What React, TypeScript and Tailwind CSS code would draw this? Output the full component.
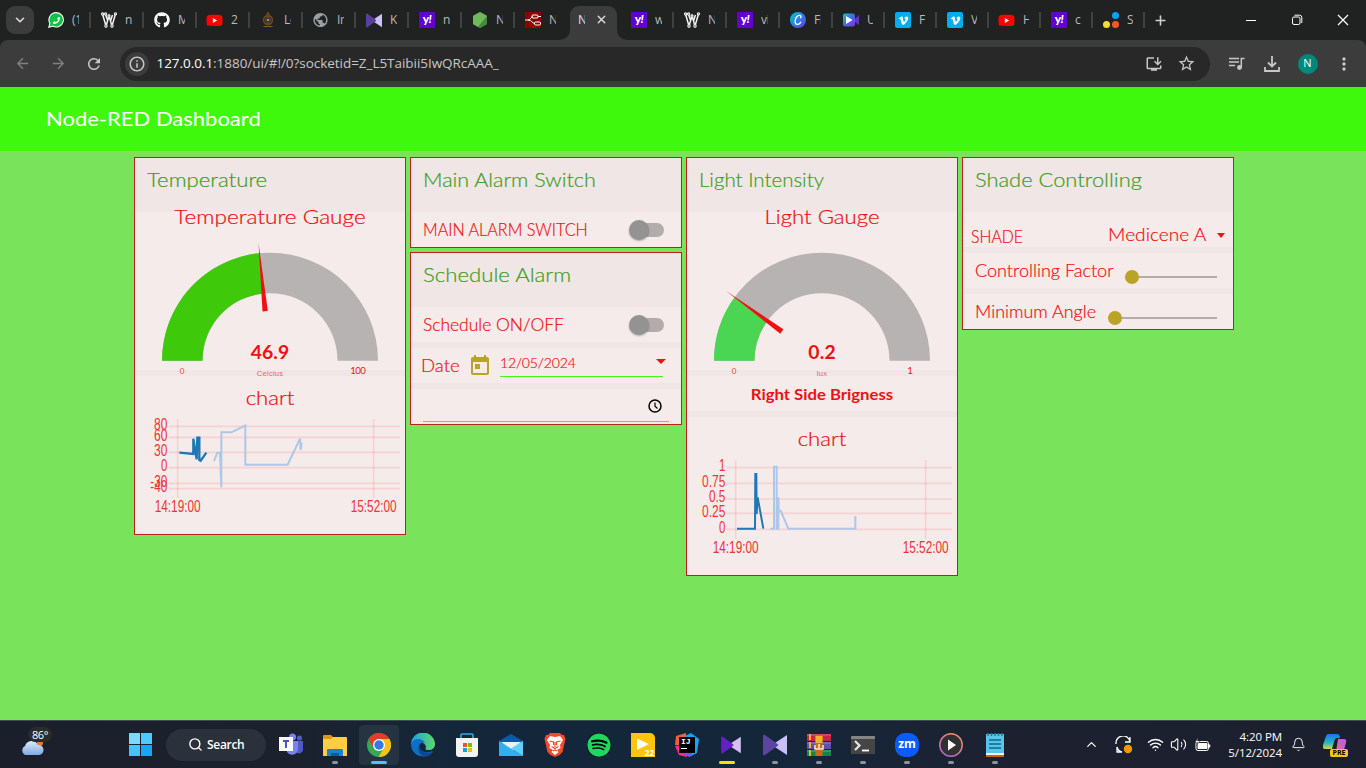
import React from "react";
import type { ReactNode } from "react";
import { FaGithub, FaYoutube, FaVimeoV, FaSpotify, FaPhoneAlt } from "react-icons/fa";
import {
  MdArrowBack, MdArrowForward, MdRefresh, MdStarBorder,
  MdMoreVert, MdOutlineInstallDesktop, MdToday, MdPublic, MdOutlineInfo,
} from "react-icons/md";
import { ChevronDown, ChevronUp, Plus, Search, X, Wifi, Volume2, Bell } from "lucide-react";

const WhatsappIcon = () => (
  <span className="relative flex h-4 w-4 items-center justify-center">
    <svg viewBox="0 0 16 16" className="absolute h-4 w-4"><path d="M8.200.6a7.200 7.200 0 1 1-3.500 13.500L.8 15.200l1.100-3.800A7.200 7.200 0 0 1 8.200.6z" fill="#0fc144" stroke="#f5fff5" strokeWidth="1.100" /></svg>
    <FaPhoneAlt size={7} className="relative -scale-x-100 text-white" />
  </span>
);

const CircuitW = () => (
  <svg viewBox="0 0 16 16" className="h-4 w-4" fill="none" stroke="#f4f4f4" strokeWidth="1.5">
    <path d="M1.5 2 5 14 8 4l3 10L14.5 2M4.5 2.5 6.5 8M9.5 9l2-6" />
    <g fill="#202221" strokeWidth="1.1"><circle cx="1.6" cy="2" r="1.1" /><circle cx="4.6" cy="2" r="1.1" /><circle cx="8" cy="4" r="1.1" /><circle cx="14.4" cy="1.8" r="1.1" /><circle cx="5" cy="14" r="1.2" /><circle cx="11" cy="14" r="1.2" /></g>
  </svg>
);

const Yahoo = () => (
  <span className="flex h-4 w-4 items-center justify-center bg-[#6001d2] pb-[2px] font-['Lato',sans-serif] text-[12px] font-black leading-none tracking-[-0.5px] text-white">y<i>!</i></span>
);

const Emblem = () => (
  <svg viewBox="0 0 16 16" className="h-4 w-4" fill="none">
    <path d="M6.500 3 8 .5 9.500 3v2h-3zM3.500 14.500h9M5 12h6" stroke="#8f5a1c" />
    <circle cx="8" cy="8" r="4.400" stroke="#704719" strokeWidth="1.600" />
    <circle cx="8" cy="8" r="2.500" stroke="#3d4858" strokeWidth="1.200" />
    <circle cx="8" cy="8" r="1.300" fill="#d08a25" />
  </svg>
);

const Globe = () => <MdPublic size={18} className="-ml-px text-[#9aa0a6]" />;

const Bowtie = ({ left, right, className }: { left: string; right: string; className: string }) => (
  <svg viewBox="0 0 24 22" className={className}>
    <path d="M24 1v20L10 11.8a1 1 0 0 1 0-1.6z" fill={right} />
    <path d="M0 2Q0 0 2 1l12.500 9a1.200 1.200 0 0 1 0 2L2 21Q0 22 0 20z" fill={left} />
  </svg>
);

const NodeHex = () => (
  <svg viewBox="0 0 16 16" className="h-4 w-4">
    <path d="M8 0l7 4v8l-7 4-7-4V4z" fill="#5fa04e" />
    <path d="M8 0l7 4-9 10.900L1 12V4z" fill="#6fb85e" />
    <path d="M15 4v8l-7 4-2-1.100z" fill="#458a3c" />
  </svg>
);

const NodeRedIcon = () => (
  <svg viewBox="0 0 16 16" className="h-4 w-4 bg-[#8f0000]" fill="none" stroke="#fff" strokeWidth="1">
    <path d="M0 8h3c3 0 3-3.500 5-3.500M3 8c4 0 4 3.500 7 3.500M13 4.500h3M15 11.500h1" />
    <rect x="7" y="3" width="6" height="3" rx="1" /><rect x="9.500" y="10" width="6" height="3" rx="1" />
  </svg>
);

const YouTube = () => <FaYoutube size={17} className="-ml-px text-[#fe0000] [background:radial-gradient(circle,white_25%,transparent_26%)]" />;

const Canva = () => (
  <svg viewBox="0 0 16 16" className="h-4 w-4">
    <defs><linearGradient id="cv" x1="0" y1="0" x2="1" y2="1"><stop offset="0" stopColor="#00c9cf" /><stop offset=".5" stopColor="#2c83e4" /><stop offset="1" stopColor="#7a2ae8" /></linearGradient></defs>
    <circle cx="8" cy="8" r="8" fill="url(#cv)" />
    <path d="M10.600 5.800c.800-1.200.2-2.600-1.400-2.400C6.800 3.700 5 7 5.100 9.700c.1 3.400 3.800 3.600 5.600.6" fill="none" stroke="#fff" strokeWidth="1.300" strokeLinecap="round" />
  </svg>
);

const Cam = () => (
  <svg viewBox="0 0 16 16" className="h-4 w-4">
    <defs><linearGradient id="cm" x1="0" y1="0" x2="1" y2="1"><stop offset="0" stopColor="#12c7c4" /><stop offset=".5" stopColor="#3f6ce2" /><stop offset="1" stopColor="#8a2be8" /></linearGradient></defs>
    <path d="M2 1.500h7.500a2.500 2.500 0 0 1 2.500 2.500v8a2.500 2.500 0 0 1-2.500 2.500H2a2 2 0 0 1-2-2v-9a2 2 0 0 1 2-2z" fill="url(#cm)" />
    <path d="m12 7 4-4v10l-4-3z" fill="#6234c8" />
    <path d="m3 4 6.500 4L3 12z" fill="#fff" />
  </svg>
);

const Vimeo = () => <span className="flex h-4 w-4 items-center justify-center rounded-[2px] bg-[#00adef] text-white"><FaVimeoV size={11} /></span>;

const Dots = () => (
  <svg viewBox="0 0 16 16" className="h-4 w-4">
    <circle cx="12.500" cy="3.500" r="3.500" fill="#03a3f8" /><circle cx="3.500" cy="12.500" r="3.500" fill="#fddb2b" /><circle cx="12.500" cy="12.500" r="3.500" fill="#fd5722" />
  </svg>
);

const TabBow = () => <Bowtie left="#5b3fa0" right="#ccc2fb" className="h-[15px] w-4" />;

interface TabData { icon: ReactNode; label: string; narrow?: boolean; last?: boolean }

const before: TabData[] = [
  { icon: <WhatsappIcon />, label: "(1" },
  { icon: <CircuitW />, label: "n" },
  { icon: <FaGithub size={16} className="text-white" />, label: "M" },
  { icon: <YouTube />, label: "2" },
  { icon: <Emblem />, label: "Lo" },
  { icon: <Globe />, label: "Ir" },
  { icon: <TabBow />, label: "K" },
  { icon: <Yahoo />, label: "n" },
  { icon: <NodeHex />, label: "N" },
  { icon: <NodeRedIcon />, label: "N", last: true },
];

const after: TabData[] = [
  { icon: <Yahoo />, label: "w" },
  { icon: <CircuitW />, label: "N" },
  { icon: <Yahoo />, label: "vi" },
  { icon: <Canva />, label: "Fi" },
  { icon: <Cam />, label: "U", narrow: true },
  { icon: <Vimeo />, label: "F", narrow: true },
  { icon: <Vimeo />, label: "V", narrow: true },
  { icon: <YouTube />, label: "H", narrow: true },
  { icon: <Yahoo />, label: "c", narrow: true },
  { icon: <Dots />, label: "S", narrow: true },
];

function Tab({ icon, label, narrow, last }: TabData) {
  return (
    <div className={`flex h-4 shrink-0 items-center ${narrow ? "w-[52px]" : "w-[53px]"}`}>
      <div className="flex w-4 shrink-0 justify-center">{icon}</div>
      <div className={`ml-2 shrink-0 overflow-hidden text-[12px] leading-4 tracking-[-0.3px] text-[#b9bab9] ${narrow ? "w-[6px]" : "w-[7px]"}`}>{label}</div>
      {!last && <div className="ml-[10px] h-4 w-[2px] shrink-0 bg-[#3f4241]" />}
    </div>
  );
}

function TabStrip() {
  return (
    <div className="flex h-10 items-start bg-[#202221]">
      <div className="ml-[6px] mt-[6px] flex h-7 w-7 shrink-0 items-center justify-center rounded-[9px] bg-[#3c3c3c]">
        <ChevronDown size={14} strokeWidth={2.8} className="text-[#dcdcdc]" />
      </div>
      <div className="ml-[14px] mt-3 flex w-[514px]">{before.map((t, i) => <Tab key={i} {...t} />)}</div>
      <div className="relative ml-2 mt-[6px] flex h-[34px] w-[47px] shrink-0 rounded-t-[9px] bg-[#3c3c3c] pl-2 pt-[6px]">
        <svg viewBox="0 0 10 10" className="absolute -left-[10px] bottom-0 h-[10px] w-[10px]"><path d="M10 0v10H0A10 10 0 0 0 10 0" fill="#3c3c3c" /></svg>
        <svg viewBox="0 0 10 10" className="absolute -right-[10px] bottom-0 h-[10px] w-[10px]"><path d="M0 0v10h10A10 10 0 0 1 0 0" fill="#3c3c3c" /></svg>
        <div className="w-[7px] overflow-hidden text-[12px] leading-4 text-[#e3e3e3]">N</div>
        <X size={13} strokeWidth={2.600} className="ml-[10px] mt-[1px] text-[#dedede]" />
      </div>
      <div className="ml-[14px] mt-3 flex w-[516px] shrink-0">{after.map((t, i) => <Tab key={i} {...t} />)}</div>
      <Plus size={15} strokeWidth={2.500} className="ml-[6px] mt-[12.500px] shrink-0 text-[#cfcfcf]" />
      <div className="flex flex-1 items-center justify-between pl-[77px] pr-[17px] pt-[14px] text-white">
        <svg viewBox="0 0 12 12" className="h-3 w-3"><path d="M1 6.500h10" stroke="currentColor" /></svg>
        <svg viewBox="0 0 12 12" className="ml-[8px] h-3 w-3" fill="none" stroke="currentColor"><rect x="1.500" y="3" width="7.500" height="7.500" rx="1.500" /><path d="M3.500 1.200H8.500a2.300 2.300 0 0 1 2.300 2.300V9" /></svg>
        <svg viewBox="0 0 12 12" className="ml-[8px] h-3 w-3"><path d="m1 1 10 10M11 1 1 11" stroke="currentColor" strokeWidth="1.200" /></svg>
      </div>
    </div>
  );
}

function Toolbar() {
  return (
    <div className="bg-[#202221]">
      <div className="flex h-[47px] items-center rounded-t-[8px] bg-[#3c3c3c] text-[#c7c7c7]">
        <MdArrowBack size={17} className="ml-[13.500px] text-[#808080]" />
        <MdArrowForward size={17} className="ml-[19px] text-[#808080]" />
        <MdRefresh size={18} className="ml-[18px]" />
        <div className="ml-[17px] flex h-[34px] w-[1090px] items-center rounded-full bg-[#282828] pl-[5px]">
          <span className="flex h-6 w-6 items-center justify-center rounded-full bg-[#3c3c3c]"><MdOutlineInfo size={18} /></span>
          <span className="ml-2 whitespace-nowrap font-['Open_Sans',sans-serif] text-[13.5px] tracking-[-0.04px] text-[#c7c7c7]"><span className="text-white">127.0.0.1</span>:1880/ui/#!/0?socketid=Z_L5Taibii5IwQRcAAA_</span>
          <MdOutlineInstallDesktop size={18} className="ml-auto" />
          <MdStarBorder size={19} className="ml-[14px] mr-[14px]" />
        </div>
        <svg viewBox="0 0 16 14" className="ml-[19px] h-[14px] w-4" fill="none" stroke="currentColor" strokeWidth="1.500"><path d="M0 1.500h10M0 5h10M0 8.500h6M15.500 1.500h-3.200v8.500" /><circle cx="10.500" cy="10.500" r="1.700" fill="currentColor" /></svg>
        <svg viewBox="0 0 16 16" className="ml-[19px] h-4 w-4" fill="none" stroke="currentColor" strokeWidth="1.800"><path d="M8 0v10M4 6.500l4 4 4-4M1 11v4h14v-4" /></svg>
        <span className="ml-[18px] flex h-5 w-5 items-center justify-center rounded-full bg-[#00897b] text-[11px] text-white">N</span>
        <MdMoreVert size={20} className="ml-[16px]" />
      </div>
    </div>
  );
}

function Card({ title, titleClass, children }: { title: string; titleClass: string; children: ReactNode }) {
  return (
    <section className="w-[272px] border border-[#bd1f22] bg-[#f0e6e6] font-['Lato',sans-serif] font-light text-[#ee1111]">
      <h2 className="h-[54px] whitespace-nowrap pl-3 pt-[9px] text-[20px] leading-6 text-[#3c9d21] [-webkit-text-stroke:0.2px_#3c9d21]">
        <span className={`inline-block origin-left ${titleClass}`}>{title}</span>
      </h2>
      <div className="flex flex-col gap-[6px]">{children}</div>
    </section>
  );
}

function Row({ children }: { children?: ReactNode }) {
  return <div className="flex h-[35px] items-center whitespace-nowrap bg-[#f5ebea]">{children}</div>;
}

function Label({ className, children }: { className: string; children: ReactNode }) {
  return <span className={`inline-block origin-left text-[17px] leading-5 [-webkit-text-stroke:0.2px_#ee1111] ${className}`}>{children}</span>;
}

function Toggle() {
  return (
    <div className="ml-auto mr-[17px] flex h-[14px] w-[34px] items-center rounded-full bg-[#b2adac]">
      <span className="-ml-px h-5 w-5 rounded-full bg-[#949393] shadow-[0_1px_2px_rgba(0,0,0,0.3)]" />
    </div>
  );
}

interface GaugeProps { title: string; titleWidth: number; fraction: number; color: string; value: string; valueWidth: number; unit: string; unitWidth: number; max: string; maxWidth: number }

function Gauge(g: GaugeProps) {
  const a = Math.PI * (1 - g.fraction);
  const at = (r: number, s = 0) => `${420 + r * Math.cos(a) - s * Math.sin(a)} ${632 - r * Math.sin(a) - s * Math.cos(a)}`;
  return (
    <div className="relative h-[158px] bg-[#f5ebea]">
      <svg viewBox="15 186 810 474" className="h-[158px] w-[270px] overflow-visible" fill="#ee1111" textAnchor="middle">
        <text x="420" y="222" fontSize="59" stroke="#ee1111" strokeWidth="0.7" textLength={g.titleWidth} lengthAdjust="spacingAndGlyphs">{g.title}</text>
        <path d="M96 632a324 324 0 0 1 648 0H622.500a202.500 202.500 0 0 0-405 0z" fill="#b7b3b2" />
        <path d={`M96 632A324 324 0 0 1 ${at(324)}L${at(202.5)}A202.500 202.500 0 0 0 217.500 632z`} fill={g.color} />
        <path d={`M${at(354)}L${at(149, 8)}L${at(149, -8)}z`} />
        <text x="420" y="627" fontSize="58" fontWeight="700" textLength={g.valueWidth}>{g.value}</text>
        <text x="156" y="671" fontSize="24" fontWeight="400" opacity="0.8">0</text>
        <text x="684" y="672" fontSize="29" fontWeight="400" textLength={g.maxWidth}>{g.max}</text>
        <text x="420" y="677" fontSize="23" fontFamily="Liberation Sans" fontWeight="400" opacity="0.65" textLength={g.unitWidth}>{g.unit}</text>
      </svg>
    </div>
  );
}

interface ChartProps { top: number; offset: number; axisX: number; labelX: number; ticks: { label: string; line: number; base: number; w: number }[]; dark: string; darkWidth: number; light: string; lightWidth: number; extra?: ReactNode }

function Chart(c: ChartProps) {
  const o = c.offset;
  return (
    <div className="h-[158px] bg-[#f5ebea]">
      <svg viewBox={`15 ${c.top} 810 474`} className="h-[158px] w-[270px] overflow-visible" fill="#ee3333">
        <text x="420" y={765 + o} fontSize="59" fill="#ee1111" stroke="#ee1111" strokeWidth="0.7" textAnchor="middle" textLength="146" lengthAdjust="spacingAndGlyphs">chart</text>
        <g stroke="#ee1111" strokeOpacity="0.11" strokeWidth="5">
          {c.ticks.map((t) => <path key={t.label} d={`M${c.labelX + 4} ${t.line}H810`} />)}
          <path d={`M${c.axisX} ${807 + o}V${1044 + o}M731 ${807 + o}V${1044 + o}`} />
        </g>
        <g fontFamily="Liberation Sans" fontWeight="400" fontSize="48" textAnchor="end">
          {c.ticks.map((t) => <text key={t.label} x={c.labelX} y={t.base} textLength={t.w} lengthAdjust="spacingAndGlyphs">{t.label}</text>)}
        </g>
        <g fontFamily="Liberation Sans" fontWeight="400" fontSize="48" textAnchor="middle">
          <text x={c.axisX} y={1085 + o} textLength="138" lengthAdjust="spacingAndGlyphs">14:19:00</text>
          <text x="731" y={1085 + o} textLength="138" lengthAdjust="spacingAndGlyphs">15:52:00</text>
        </g>
        <path d={c.light} fill="none" stroke="#aec7e8" strokeWidth={c.lightWidth} />
        <path d={c.dark} fill="none" stroke="#1f77b4" strokeWidth={c.darkWidth} />
        {c.extra}
      </svg>
    </div>
  );
}

function Dashboard() {
  return (
    <main className="h-[633px] bg-[#7ae35c]">
      <header className="flex h-16 items-center bg-[#3ff90c] pb-[2px] pl-[46px] font-['Lato',sans-serif] text-[20px] text-white">
        <span className="origin-left scale-x-[1.100]">Node-RED Dashboard</span>
      </header>
      <div className="flex items-start gap-1 pl-[134px] pt-[6px]">
        <Card title="Temperature" titleClass="scale-x-[1.110]">
          <Gauge title="Temperature Gauge" titleWidth={574} fraction={0.469} color="#3ec90a" value="46.9" valueWidth={115} unit="Celcius" unitWidth={79} max="100" maxWidth={47} />
          <Chart top={678} offset={0} axisX={143} labelX={112}
            ticks={[
              { label: "80", line: 829, base: 840, w: 40 }, { label: "60", line: 862, base: 873, w: 40 },
              { label: "30", line: 907, base: 917, w: 40 }, { label: "0", line: 953, base: 964, w: 19 },
              { label: "-30", line: 1000, base: 1010, w: 51 }, { label: "-40", line: 1016, base: 1027, w: 51 },
            ]}
            light="M252 933 262 908H270L274 1012V847H304L346 827V944H473L510 866 512 900 515 878" lightWidth={6}
            dark="M148 908 190 912V866L200 928 202 863H208V930L212 932 229 908" darkWidth={7} />
        </Card>
        <div className="flex flex-col gap-1">
          <Card title="Main Alarm Switch" titleClass="scale-x-[1.075]">
            <Row><Label className="ml-3 scale-x-[0.950]">MAIN ALARM SWITCH</Label><Toggle /></Row>
          </Card>
          <Card title="Schedule Alarm" titleClass="scale-x-[1.110]">
            <Row><Label className="ml-3 scale-x-[1.025]">Schedule ON/OFF</Label><Toggle /></Row>
            <Row>
              <div className="w-[48px] pl-[10px]"><Label className="scale-x-[1.090]">Date</Label></div>
              <MdToday size={24} className="ml-[9px] text-[#b9a427]" />
              <div className="ml-2 flex h-[22px] w-[163px] justify-between border-b border-[#3ffa0c]">
                <span className="text-[14px] leading-4 tracking-[-0.150px] [-webkit-text-stroke:0.2px_#ee1111]">12/05/2024</span>
                <svg viewBox="0 0 10 5" className="-mr-[3px] mt-[4px] h-[5px] w-[10px]"><path d="M0 0h10L5 5z" fill="#ee1111" /></svg>
              </div>
            </Row>
            <Row>
              <div className="ml-3 flex h-[33px] w-[246px] items-center justify-end self-start border-b border-[#3ffa0c] pr-[7px] text-black">
                <svg viewBox="0 0 14 14" className="mt-px h-[14px] w-[14px]" fill="none" stroke="currentColor" strokeWidth="1.500"><circle cx="7" cy="7" r="6" /><path d="M7 3.500V7.200L9.500 9.500" strokeWidth="1.200" /></svg>
              </div>
            </Row>
          </Card>
        </div>
        <Card title="Light Intensity" titleClass="scale-x-[1.025]">
          <Gauge title="Light Gauge" titleWidth={345} fraction={0.2} color="#4ad552" value="0.2" valueWidth={83} unit="lux" unitWidth={31} max="1" maxWidth={14} />
          <Row><span className="w-full scale-x-[1.045] text-center text-[16px] font-bold">Right Side Brigness</span></Row>
          <Chart top={801} offset={123} axisX={161} labelX={130}
            ticks={[
              { label: "1", line: 953, base: 964, w: 19 }, { label: "0.75", line: 1000, base: 1010, w: 70 },
              { label: "0.5", line: 1047, base: 1057, w: 49 }, { label: "0.25", line: 1090, base: 1101, w: 70 },
              { label: "0", line: 1138, base: 1148, w: 19 },
            ]}
            light="M265 1136H276V950H284V1136H289V1042L290 1082 296 1082 319 1136H520V1098" lightWidth={6}
            dark="M165 1136H219L220 972H223L224 1092 227 1042 244 1136" darkWidth={6} />
        </Card>
        <Card title="Shade Controlling" titleClass="scale-x-[1.095]">
          <Row>
            <Label className="ml-2 mt-[14px] scale-x-[0.930]">SHADE</Label>
            <Label className="ml-auto mr-[1px] mt-[10px] !origin-right scale-x-[1.125]">Medicene A</Label>
            <svg viewBox="0 0 8 5" className="ml-[10px] mr-[8px] mt-[12px] h-[5px] w-2"><path d="M0 0h8L4 5z" fill="#ee1111" /></svg>
          </Row>
          <Row>
            <Label className="ml-3 scale-x-[1.060]">Controlling Factor</Label>
            <div className="ml-auto mr-4 mt-[13px] flex h-[2px] w-[92px] items-center bg-[#b2adac]"><span className="h-[14px] w-[14px] rounded-full bg-[#b9a427]" /></div>
          </Row>
          <Row>
            <Label className="ml-3 scale-x-[1.055]">Minimum Angle</Label>
            <div className="ml-auto mr-4 mt-[13px] flex h-[2px] w-[109px] items-center bg-[#b2adac]"><span className="h-[14px] w-[14px] rounded-full bg-[#b9a427]" /></div>
          </Row>
        </Card>
      </div>
    </main>
  );
}

const Teams = () => (
  <svg viewBox="0 0 24 24" className="h-6 w-6"><circle cx="13.500" cy="4" r="3.500" fill="#7b83eb" /><circle cx="20.500" cy="5" r="2.600" fill="#5059c9" /><path d="M17 8h7v9a4 4 0 0 1-7 2z" fill="#5059c9" /><path d="M8 8h11v8a6 6 0 0 1-11 3z" fill="#7b83eb" /><path d="M0 4h14v14H0z" fill="#fff" /><path d="M4 8h6M7 8v7" stroke="#4b53bc" strokeWidth="2" /></svg>
);
const Folder = () => (
  <svg viewBox="0 0 24 24" className="h-6 w-6"><path d="M0 3q0-1 1-1h7l3 3v4H0z" fill="#d99a13" /><path d="M0 6h8l2-2h13q1 0 1 1v18H0z" fill="#ffce45" /><path d="M4 23v-6q0-1 1-1h14q1 0 1 1v6z" fill="#1583d8" /><path d="M8 23v-3h8v3z" fill="#0c59a4" /></svg>
);
const Chrome = () => (
  <svg viewBox="0 0 24 24" className="h-6 w-6"><circle cx="12" cy="12" r="12" fill="#34a853" /><path d="M12 6h10.400A12 12 0 0 1 11.500 24L17 15z" fill="#fbc116" /><path d="M12 6h10.400A12 12 0 0 0 1.600 6l5.200 9z" fill="#e33b2e" /><circle cx="12" cy="12" r="6" fill="#fff" /><circle cx="12" cy="12" r="4.700" fill="#2f7bea" /></svg>
);
const Edge = () => (
  <svg viewBox="0 0 24 24" className="h-6 w-6">
    <defs><linearGradient id="ed" x1="0" x2="1"><stop stopColor="#1ba0e2" /><stop offset="1" stopColor="#5bda65" /></linearGradient></defs>
    <path d="M0 12A12 12 0 0 1 24 11c0 4-3 6-6 6-4 0-4-1-3-3 0-4-8-8-15-2z" fill="url(#ed)" />
    <path d="M0 12c1-7 11-8 14-2-4-1-6 1-6 4 0 4 6 7 14 4A12 12 0 0 1 0 12z" fill="#0f6fc5" />
    <path d="M10 10c-4 2-4 12 4 13.800 4 0 7-3 8-5.300-6 3-13 0-13-4.500 0-2 .5-3 1-4z" fill="#0b4a90" />
  </svg>
);
const Store = () => (
  <svg viewBox="0 0 24 24" className="h-6 w-6"><path d="M6 6V2q0-1 1-1h10q1 0 1 1v4" fill="none" stroke="#28afea" strokeWidth="1.600" /><path d="M1 5h22v16q0 3-3 3H4q-3 0-3-3z" fill="#f3f3f3" /><path d="M8 10h4v4H8z" fill="#f25022" /><path d="M13 10h4v4h-4z" fill="#7fba00" /><path d="M8 15h4v4H8z" fill="#00a4ef" /><path d="M13 15h4v4h-4z" fill="#ffb900" /></svg>
);
const Mail = () => (
  <svg viewBox="0 0 24 24" className="h-6 w-6"><path d="M0 8 12 1l12 7v6H0z" fill="#0c59a8" /><path d="M2 9h20l-9 9z" fill="#eceff3" /><path d="M0 8l24 15H0z" fill="#2fb1ee" /><path d="M24 8v15L12 15.500z" fill="#5fd0fb" /></svg>
);
const Brave = () => (
  <svg viewBox="0 0 24 24" className="h-6 w-6"><path d="M7 0h10l2 2h2l1.500 4-.5 2-2.500 11-3 3L12 24l-4.500-2-3-3L2 8l-.5-2L3 2h2z" fill="#f8482a" /><path d="M12 4l5-1 3 4-3 5 .5 3-3.500 2 1.500 2L12 22l-3.500-3 1.500-2-3.500-2 .5-3-3-5 3-4z" fill="#fff" /><path d="M6.500 8l4 1v3M17.500 8l-4 1v3M8.500 13.500l3.500 2 3.500-2M12 9v5M10 18l2-1 2 1" stroke="#f8482a" strokeWidth="1.200" fill="none" /></svg>
);
const Spotify = () => <FaSpotify size={24} className="rounded-full bg-black text-[#1ed760]" />;
const Player22 = () => (
  <div className="relative h-6 w-6 rounded-tr-[5px] bg-[#ffc40c]">
    <svg viewBox="0 0 24 24" className="h-6 w-6"><path d="M6 5.500l12 5.500L6 17z" fill="#fff" /></svg>
    <span className="absolute bottom-0 right-px text-[8px] font-bold leading-[9px] text-white">22</span>
  </div>
);
const Idea = () => (
  <div className="relative flex h-6 w-6 items-center justify-center">
    <svg viewBox="0 0 24 24" className="absolute h-6 w-6"><path d="M1 3 11 0v12H0z" fill="#fc5c3e" /><path d="M10 3 16 0l8 6-2 14-8 4z" fill="#15a5f5" /><path d="M0 13 12 11v13l-8-2z" fill="#fe2c86" /><path d="M10 18h8l-3 6-6-2z" fill="#7850f0" /></svg>
    <span className="relative h-4 w-4 bg-black pl-[2px] font-['Liberation_Mono',monospace] text-[8px] font-bold leading-[9px] text-white">IJ<span className="mt-[2px] block h-px w-[6px] bg-white" /></span>
  </div>
);
const WinRar = () => (
  <svg viewBox="0 0 24 24" className="h-6 w-6"><path d="M0 1h24v7H0z" fill="#c62646" /><path d="M0 9h24v7H0z" fill="#5951b5" /><path d="M0 17h24v6H0z" fill="#138545" /><path d="M0 2h24M0 10h24M0 18h24" stroke="#fff" strokeOpacity=".3" /><path d="M3 1v22" stroke="#e8b72c" strokeWidth="2" strokeDasharray="6 2" /><path d="M8.500 2h7v21h-7z" fill="#cc6a1a" /><path d="M8.500 3h7v7h-7z" fill="#f2b127" /><path d="M8 12v4h8v-4M12 11v4" stroke="#f6e9d3" strokeWidth="1.500" fill="none" /></svg>
);
const Term = () => (
  <svg viewBox="0 0 24 24" className="h-6 w-6"><path d="M0 4q0-1 1-1h22q1 0 1 1v17H0z" fill="#454545" /><path d="M0 4q0-1 1-1h22q1 0 1 1v2H0z" fill="#858585" /><path d="M4 8l4.500 4.500L4 17" fill="none" stroke="#e5e5e5" strokeWidth="2.200" /><path d="M11 17.500h7" stroke="#fff" strokeWidth="1.800" /></svg>
);
const Zoom = () => <div className="flex h-6 w-6 items-center justify-center rounded-[10px] bg-[#0b5cff] pb-[2px] text-[12px] font-bold leading-none text-white">zm</div>;
const Media = () => (
  <svg viewBox="0 0 24 24" className="h-6 w-6"><defs><linearGradient id="mp" x1="1" y1="0" x2=".4" y2="1"><stop stopColor="#ff944a" /><stop offset="1" stopColor="#b667d3" /></linearGradient></defs><circle cx="12" cy="12" r="11.200" fill="#313033" stroke="url(#mp)" strokeWidth="1.500" /><path d="M9 6.500 17 12l-8 5.500z" fill="#fff" /></svg>
);
const Notepad = () => (
  <svg viewBox="0 0 24 24" className="h-6 w-6"><path d="M3 20h18v4H3z" fill="#c76315" /><path d="M3 20h18v2H3z" fill="#f5f2ed" /><path d="M3 1h18v19H3z" fill="#55c5e8" /><path d="M5 0v3M8.500 0v3M12 0v3M15.500 0v3M19 0v3" stroke="#1c7ca0" strokeWidth="1.500" /><path d="M6 7h12M6 11h12M6 15h12" stroke="#126789" strokeWidth="1.500" /></svg>
);

interface AppData { icon: ReactNode; mark?: "dot" | "blue" | "yellow" }
const apps: AppData[] = [
  { icon: <Teams /> }, { icon: <Folder />, mark: "dot" }, { icon: <Chrome />, mark: "blue" }, { icon: <Edge /> },
  { icon: <Store /> }, { icon: <Mail /> }, { icon: <Brave /> }, { icon: <Spotify /> }, { icon: <Player22 /> }, { icon: <Idea /> },
  { icon: <Bowtie left="#6121c6" right="#d7bdf5" className="h-[18px] w-[22px]" />, mark: "yellow" },
  { icon: <Bowtie left="#5b45a0" right="#c9c0fa" className="h-[22px] w-6" />, mark: "dot" },
  { icon: <WinRar />, mark: "dot" }, { icon: <Term />, mark: "dot" }, { icon: <Zoom />, mark: "dot" },
  { icon: <Media />, mark: "dot" }, { icon: <Notepad />, mark: "dot" },
];
const marks = { dot: "w-[6px] bg-[#8d939b]", blue: "w-4 bg-[#4cc2ff]", yellow: "w-4 bg-[#fce100]" };

function Taskbar() {
  return (
    <footer className="flex h-12 items-center border-t border-[#414a50] bg-[linear-gradient(90deg,#1b1f2c_0%,#1b212d_22%,#14273a_33%,#14273a_57%,#1d212f_74%,#1c202e_100%)] font-['Open_Sans',sans-serif] text-white">
      <div className="relative ml-5 h-9 w-8">
        <svg viewBox="0 0 24 16" className="absolute bottom-[8px] left-0 h-4 w-6"><defs><linearGradient id="cl" x1="0" y1="0" x2="0" y2="1"><stop stopColor="#dce9fb" /><stop offset="1" stopColor="#7fa8e5" /></linearGradient></defs><circle cx="20" cy="4" r="3" fill="#f47b20" /><path d="M5 16a5 5 0 0 1 0-9 7 7 0 0 1 13-1 5 5 0 0 1 1 10z" fill="url(#cl)" /></svg>
        <span className="absolute left-[8px] top-0 h-[15px] w-6 rounded-full bg-[#2b2b2b] text-center text-[11px] leading-[15px] tracking-[-0.400px]">86°</span>
      </div>
      <div className="ml-[77px] grid h-[23px] w-[23px] grid-cols-2 gap-px">
        <i className="bg-[#79dafd]" /><i className="bg-[#4fcafc]" /><i className="bg-[#45c3fb]" /><i className="bg-[#1ba4f5]" />
      </div>
      <div className="ml-[14px] flex h-8 w-[100px] items-center rounded-full bg-[#2a313b] pl-[22px]">
        <Search size={15} strokeWidth={2.200} /><span className="ml-[4px] text-[12px] font-semibold tracking-[-0.300px]">Search</span>
      </div>
      <div className="ml-[3px] flex">
        {apps.map((a, i) => (
          <div key={i} className={`mx-[2px] flex h-10 w-10 flex-col items-center rounded-[4px] pt-[8px] ${a.mark === "blue" ? "bg-[#263442]" : ""}`}>
            <div className="flex h-6 w-6 items-center justify-center">{a.icon}</div>
            {a.mark && <span className={`mt-[4px] h-[3px] rounded-full ${marks[a.mark]} ${a.mark === "yellow" ? "-ml-2" : ""}`} />}
          </div>
        ))}
      </div>
      <ChevronUp size={15} className="ml-[67px] shrink-0" />
      <svg viewBox="0 0 18 18" className="ml-[16px] h-[18px] w-[18px] shrink-0" fill="none" stroke="#fff" strokeWidth="1.300"><path d="M1 8a7 7 0 0 1 14-2M15 1v5h-5M2 11v5h5M2 11a7 7 0 0 0 5 5" /><circle cx="13" cy="13" r="4.200" fill="#ff9800" stroke="none" /></svg>
      <Wifi size={17} className="ml-[14px] shrink-0" />
      <Volume2 size={17} strokeWidth={1.500} className="ml-[6px] shrink-0" />
      <svg viewBox="0 0 17 14" className="ml-[7px] h-[14px] w-[17px] shrink-0" fill="none" stroke="#fff"><rect x="2" y="3.500" width="12.500" height="9" rx="2" /><path d="M4 5.500h9v5H4z" fill="#fff" /><path d="M15.500 6.500v3" strokeWidth="1.500" /><path d="M4 0 1 4.500h3L2.500 8 6 3H3.500z" fill="#fff" stroke="#1c202e" strokeWidth=".4" /></svg>
      <div className="ml-auto mr-[9px] text-right text-[11.500px] leading-4 tracking-[-0.080px]"><div>4:20 PM</div><div>5/12/2024</div></div>
      <Bell size={15} strokeWidth={1.500} className="shrink-0" />
      <div className="relative ml-[17px] mr-[19px] h-6 w-6 shrink-0">
        <svg viewBox="0 0 24 24" className="h-6 w-6"><defs><linearGradient id="co" x1="0" y1="0" x2="0" y2="1"><stop stopColor="#1b75e8" /><stop offset=".6" stopColor="#27b8c0" /><stop offset="1" stopColor="#dbd43b" /></linearGradient><linearGradient id="cp" x1="1" y1="0" x2="0" y2="1"><stop stopColor="#b45df0" /><stop offset="1" stopColor="#fb6a72" /></linearGradient></defs><path d="M5 1h9q3 0 3 4h-3q-2 0-3 4l-2 7H2q-3 0-2-4L3 3q1-2 2-2z" fill="url(#co)" /><path d="M15 6h6q3 0 2 4l-3 10q-1 3-4 3h-6q2 0 3-4z" fill="url(#cp)" /></svg>
        <span className="absolute -right-px bottom-0 h-[8px] w-[18px] rounded-[2px] bg-[#fcc419] text-center text-[7px] font-bold leading-[8px] text-black">PRE</span>
      </div>
    </footer>
  );
}

export default function App() {
  return (
    <div className="h-[768px] w-[1366px] overflow-hidden font-['Open_Sans',sans-serif]">
      <TabStrip />
      <Toolbar />
      <Dashboard />
      <Taskbar />
    </div>
  );
}
